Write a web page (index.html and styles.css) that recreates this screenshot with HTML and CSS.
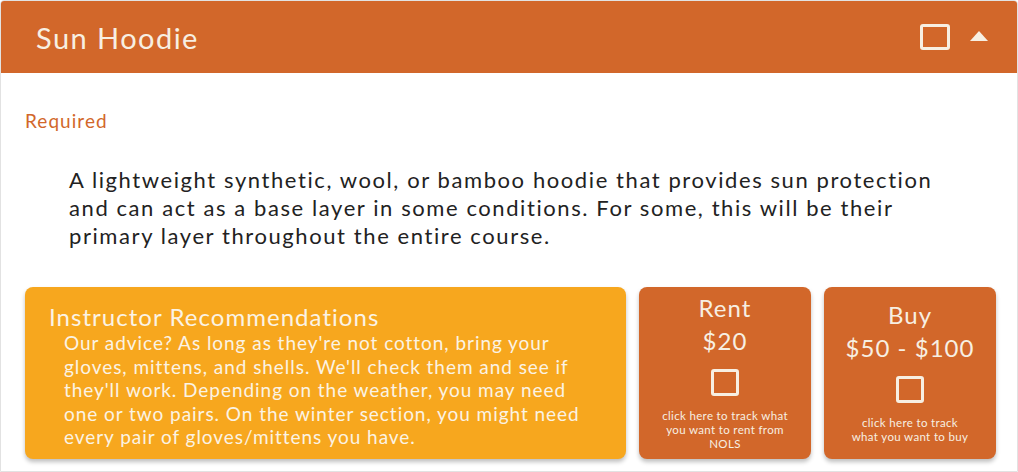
FILE: index.html
```html
<!DOCTYPE html>
<html lang="en">
<head>
    <meta charset="UTF-8">
    <meta name="viewport" content="width=device-width, initial-scale=1.0">
    <title>Sun Hoodie</title>
    <link rel="stylesheet" href="styles.css">
</head>
<body>
    <div class="gear-card">
        <div class="gear-header">
            <h2>Sun Hoodie</h2>
            <div class="header-actions">
                <span class="check-box big"></span>
                <svg class="caret" width="18" height="10" viewBox="0 0 18 10"><path d="M0 10 L9 0 L18 10 Z" fill="#f7efe2"/></svg>
            </div>
        </div>

        <div class="gear-body">
            <div class="required">Required</div>
            <p class="description">A lightweight synthetic, wool, or bamboo hoodie that provides sun protection and can act as a base layer in some conditions. For some, this will be their primary layer throughout the entire course.</p>

            <div class="options">
                <div class="recommend">
                    <h3>Instructor Recommendations</h3>
                    <p>Our advice? As long as they're not cotton, bring your gloves, mittens, and shells. We'll check them and see if they'll work. Depending on the weather, you may need one or two pairs. On the winter section, you might need every pair of gloves/mittens you have.</p>
                </div>
                <div class="option">
                    <div class="option-title">Rent</div>
                    <div class="option-price">$20</div>
                    <span class="check-box"></span>
                    <div class="option-note">click here to track what you want to rent from NOLS</div>
                </div>
                <div class="option">
                    <div class="option-title">Buy</div>
                    <div class="option-price">$50 - $100</div>
                    <span class="check-box"></span>
                    <div class="option-note narrow">click here to track what you want to buy</div>
                </div>
            </div>
        </div>
    </div>
</body>
</html>
```

FILE: styles.css
```css
* {
    margin: 0;
    padding: 0;
    box-sizing: border-box;
}

body {
    font-family: Lato, 'Open Sans', sans-serif;
    letter-spacing: 0.065em;
    background: #fff;
    width: 1018px;
    height: 472px;
    overflow: hidden;
}

.gear-card {
    border: 1px solid #e2e2e2;
    border-radius: 4px 4px 0 0;
    height: 472px;
    overflow: hidden;
}

.gear-header {
    background: #d2672a;
    height: 72px;
    display: flex;
    align-items: center;
    justify-content: space-between;
    padding: 0 29px 0 35px;
}

.gear-header h2 {
    color: #f7efe2;
    font-size: 29px;
    font-weight: 400;
    letter-spacing: 0.05em;
}

.header-actions {
    display: flex;
    align-items: center;
    gap: 20px;
}

.caret {
    margin-top: -2px;
}

.check-box {
    display: block;
    width: 28px;
    height: 27px;
    border: 3px solid #f7efe2;
    border-radius: 3px;
}

.check-box.big {
    width: 30px;
    height: 26px;
}

.gear-body {
    padding: 36px 21px 0 24px;
}

.required {
    color: #d2672a;
    font-size: 19px;
}

.description {
    color: #222;
    font-size: 22px;
    line-height: 28px;
    letter-spacing: 0.072em;
    padding: 34px 48px 0 44px;
}

.options {
    display: flex;
    gap: 13px;
    margin-top: 37px;
}

.recommend {
    flex: 0 0 601px;
    height: 172px;
    background: #f7a71e;
    border-radius: 8px;
    box-shadow: 0 3px 4px rgba(0, 0, 0, 0.25);
    padding: 16px 20px 0 24px;
    color: #fbf3e4;
}

.recommend h3 {
    font-size: 24px;
    font-weight: 400;
    line-height: 28px;
}

.recommend p {
    font-size: 19px;
    line-height: 23.5px;
    letter-spacing: 0.05em;
    width: 541px;
    padding-left: 15px;
}

.option {
    flex: 0 0 172px;
    height: 172px;
    background: #d2672a;
    border-radius: 8px;
    box-shadow: 0 3px 4px rgba(0, 0, 0, 0.25);
    display: flex;
    flex-direction: column;
    align-items: center;
    justify-content: center;
    color: #f7efe2;
    text-align: center;
    padding: 0 18px 3px;
}

.option-title,
.option-price {
    font-size: 24px;
    line-height: 32px;
}

.option-price {
    line-height: 34px;
}

.option .check-box {
    margin: 11px 0 13px;
}

.option-note {
    font-size: 11.5px;
    line-height: 14px;
    letter-spacing: 0.03em;
}

.option-note.narrow {
    width: 122px;
}
```
